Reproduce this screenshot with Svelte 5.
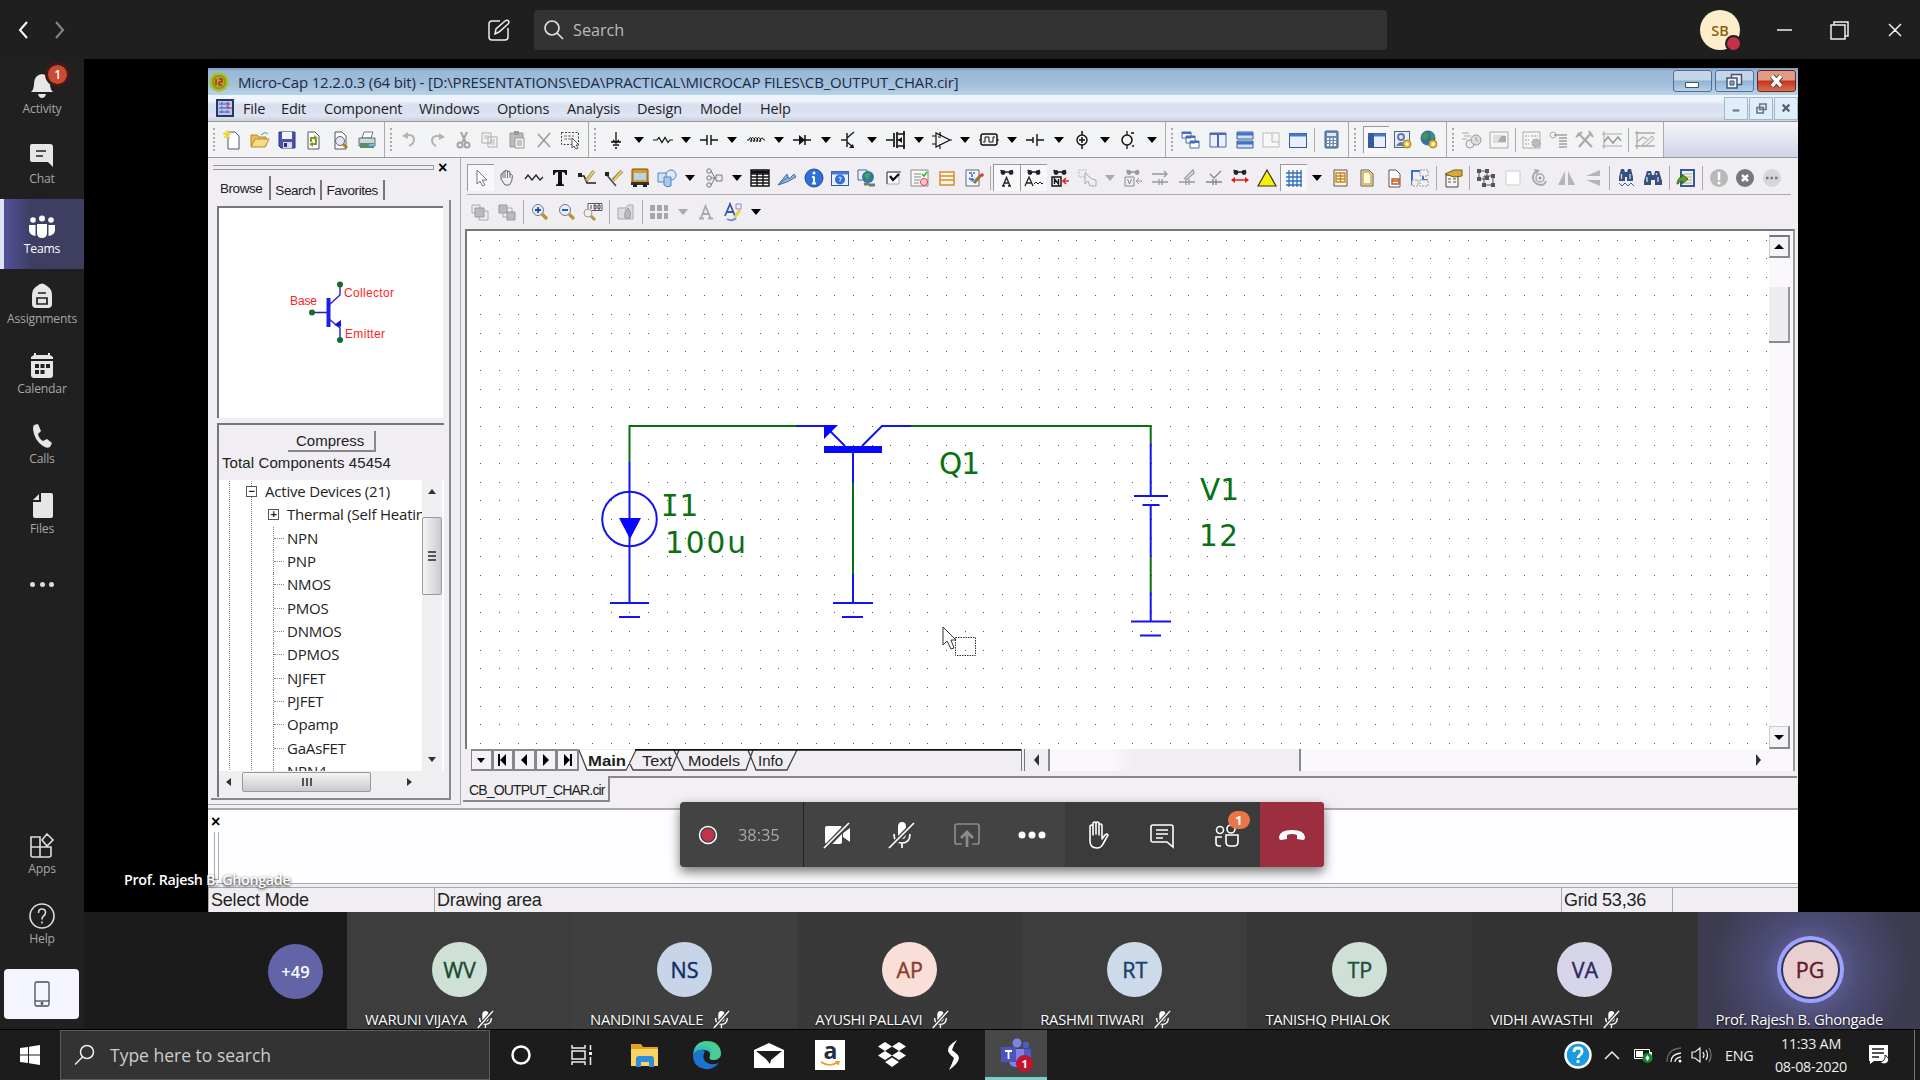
<script>
  // Toolbar glyphs, each drawn in a 20x20 box.
  const page = '<path d="M5 2h7l4 4v13H5z" fill="#fff" stroke="#556" />';
  const glass = '<circle cx="8" cy="8" r="5.5" fill="#e4eefc" stroke="#778"/><path d="M12 12l5 5" stroke="#b99335" stroke-width="3.2"/>';
  const win = '<rect x="1.5" y="3.500" width="17" height="14" fill="#e8f0ff" stroke="#345a9c"/><path d="M1.500 5h17" stroke="#4a78d0" stroke-width="3"/>';
  const specs = '<path d="M3 3l2-1M14 3l2-1" stroke="COL"/><circle cx="6" cy="4.500" r="2.400" fill="COL"/><circle cx="14" cy="4.500" r="2.400" fill="COL"/><path d="M8 4h4" stroke="COL" stroke-width="1.500"/>';
  const dark = specs.replaceAll('COL', '#222');
  const pale = specs.replaceAll('COL', '#999');
  const bulb = '<circle cx="14" cy="14" r="4" fill="#eac63c" stroke="#a5821c"/><circle cx="14" cy="14" r="1.500" fill="#fff"/>';
  const art = {
    new: page + '<path d="M1 2l6 6M7 1L1 8M4 0v8M0 4h8" stroke="#e8d838" stroke-width="1.300"/>',
    open: '<path d="M1 16V5h6l2 2h7v9z" fill="#e8bd50" stroke="#b98b2c"/><path d="M1 17l4-8h14l-4 8z" fill="#f7dc85" stroke="#b98b2c"/><path d="M11 5q4-4 7-1" stroke="#58a" fill="none"/>',
    save: '<path d="M2 2h16v16H4l-2-2z" fill="#4c50ae" stroke="#2e3180"/><path d="M5 2h10v7H5z" fill="#f4f4ff"/><path d="M6 12h9v6H6z" fill="#d8d8e8"/><path d="M7 13h3v4H7z" fill="#2e3180"/>',
    revert: page + '<path d="M8 12V8h4M13 9v5H9" stroke="#7c9f22" stroke-width="2" fill="none"/><path d="M11 5l4 3-4 2zM10 17l-4-3 4-2z" fill="#7c9f22"/>',
    preview: page + '<circle cx="10" cy="11" r="4.500" fill="#dce8f8" stroke="#666"/><path d="M13 14l4 4" stroke="#b97a25" stroke-width="3"/>',
    print: '<path d="M5 8l2-6h9l-2 6z" fill="#fff" stroke="#777"/><path d="M2 8h16v8H2z" fill="#cdd6dc" stroke="#667"/><path d="M3 13h14v5H3z" fill="#5c8e6a"/><path d="M12 14h5v2h-5z" fill="#76b8e8"/>',
    undo: '<path d="M4 6q9-3 10 3 0 5-5 7" stroke="#b4b4b4" stroke-width="2" fill="none"/><path d="M2 6l6-4v7z" fill="#b4b4b4"/>',
    redo: '<path d="M15 7q-9-3-10 3 0 4 4 6" stroke="#b4b4b4" stroke-width="2" fill="none"/><path d="M18 7l-6-4v7z" fill="#b4b4b4"/>',
    cut: '<path d="M7 2l5 11M13 2L8 13" stroke="#a6a6a6" stroke-width="2"/><circle cx="6" cy="15" r="2.500" stroke="#a6a6a6" stroke-width="2" fill="none"/><circle cx="13" cy="15" r="2.500" stroke="#a6a6a6" stroke-width="2" fill="none"/>',
    copy: '<path d="M2 3h9v10H2zM8 7h9v10H8z" fill="#f6f6f6" stroke="#aaa"/><path d="M4 6h5M4 8h4M10 10h5M10 12h5M10 14h5" stroke="#b5b5b5"/>',
    paste: '<path d="M3 3h13v14H3z" fill="#bbb" stroke="#999"/><path d="M7 1h5v4H7z" fill="#999"/><path d="M8 8h9v10H8z" fill="#f1f1f1" stroke="#999"/><path d="M10 11h5M10 13h5M10 15h5" stroke="#999"/>',
    del: '<path d="M4 4l12 13M16 3L4 17" stroke="#999" stroke-width="1.600"/>',
    sel: '<path d="M1.500 2.500h17v12h-17z" fill="none" stroke="#444" stroke-dasharray="2 1.500"/><path d="M4 6h10M4 9h7" stroke="#777" stroke-dasharray="3 1"/><path d="M12 8v10l2-2 2 3 2-1-2-3h3z" fill="#fff" stroke="#555"/>',
    gnd: '<path d="M10 2v10M5 12h10M7 15h6M9 18h2M7 10l3 3 3-3" stroke="#111" stroke-width="1.300" fill="none"/>',
    res: '<path d="M0 10h4l2-2.500 3 5 3-5 3 5 2-2.500h3" stroke="#111" fill="none" stroke-width="1.200"/>',
    cap: '<path d="M1 10h7M12 10h7M8 5v10M12 5v10" stroke="#111" stroke-width="1.400"/>',
    ind: '<path d="M1 10h2q1-5 3 0q-2 4-1 0q1-5 4 0q-2 4-1 0q1-5 4 0q-2 4-1 0q1-5 4 0q-2 4-1 0q2-4 4 0h1" stroke="#111" fill="none"/>',
    dio: '<path d="M1 10h18M13 5v10" stroke="#111" stroke-width="1.500"/><path d="M7 5l6 5-6 5z" fill="#111"/>',
    npn: '<path d="M2 10h6M8 3v14M8 8l7-6M8 12l6 5" stroke="#222" stroke-width="1.500"/><path d="M15 18h-5l4-4z" fill="#111"/>',
    mos: '<path d="M0 10h7M8 3v14M11 2v16M11 4h8M11 10h5M11 16h8M18 1v18" stroke="#111" stroke-width="1.700"/><path d="M12 10l4-3v6z" fill="#111"/>',
    amp: '<path d="M4 3v14l14-7zM0 6h4M0 14h4M8 2v4M8 14v5M18 10h2M6 7h3" fill="none" stroke="#111" stroke-width="1.200"/>',
    dig: '<rect x="2" y="4" width="16" height="11" rx="2" fill="none" stroke="#111" stroke-width="1.500"/><path d="M4 12h2V7h4v5h4V7h2M0 10h2M18 10h2" fill="none" stroke="#111"/>',
    bat: '<path d="M1 10h7M12 10h7M8 7v6M12 4v12" stroke="#111" stroke-width="1.400"/>',
    src: '<circle cx="10" cy="10" r="5" fill="none" stroke="#111" stroke-width="1.400"/><path d="M10 1v4M10 15v4M7 10h6M10 7v6" stroke="#111" stroke-width="1.500"/>',
    osc: '<circle cx="9" cy="10" r="5" fill="none" stroke="#111" stroke-width="1.500"/><path d="M9 1v4M9 15v4M13 3h3M14 16h2" stroke="#111" stroke-width="1.300"/>',
    casc: '<path d="M1 2h9v6H1zM5 6h9v7H5zM9 11h9v7H9z" fill="#fff" stroke="#456cb4"/><path d="M1 3h9M5 7h9M9 12h9" stroke="#456cb4" stroke-width="2"/>',
    tilev: '<path d="M2 3h16v14H2z" fill="#e9f0ff" stroke="#53679c"/><path d="M2 4h16M10 3v14" stroke="#5067ac" stroke-width="2"/>',
    tileh: '<path d="M2 2h16v7H2zM2 11h16v7H2z" fill="#cfe1fb" stroke="#355a99"/><path d="M2 4h16M2 13h16" stroke="#4374c4" stroke-width="3"/>',
    tile: '<path d="M2 3h16v14H2zM11 3v9h7" fill="#f8f8f8" stroke="#bbb"/>',
    win,
    calc: '<rect x="4" y="1" width="13" height="17" rx="1" fill="#6f8db5" stroke="#42618c"/><path d="M6 3h9v3H6z" fill="#d9ecff"/><path d="M6 9h9M6 12h9M6 15h9" stroke="#fff" stroke-width="1.800" stroke-dasharray="2 1.500"/>',
    pan: win + '<path d="M2 3h5v15H2z" fill="#355a99"/>',
    user: '<rect x="1.500" y="1.500" width="15" height="16" fill="#e8ecff" stroke="#566"/><circle cx="8" cy="7" r="3" fill="none" stroke="#67a" stroke-width="2"/><path d="M3 16q5-8 10 0" fill="#67a"/>' + bulb,
    globe: '<circle cx="9" cy="8" r="7.500" fill="#3272a8"/><path d="M3 5q4-5 7 0l-3 5-4-1zM12 2q4 3 4 6l-4 2z" fill="#45964c"/>' + bulb,
    g1: '<path d="M0 3h7M2 6h7M0 9h5" stroke="#aaa"/><circle cx="8" cy="14" r="4" fill="#eee" stroke="#999"/><circle cx="14" cy="10" r="5" fill="#ddd" stroke="#999"/><path d="M14 7v3l2 1" stroke="#999" fill="none"/>',
    g2: '<path d="M1 2h18v16H1z" fill="#f5f5f5" stroke="#aaa"/><path d="M4 5h12v8H4z" fill="#ddd"/><path d="M12 6h5v6h-8z" fill="#aaa"/>',
    g3: '<path d="M1 2h17v16H1z" fill="#f5f5f5" stroke="#aaa"/><path d="M3 6h4M3 10h4M3 14h4M9 6h7" stroke="#999" stroke-dasharray="2 1"/><circle cx="14" cy="13" r="4" fill="#bbb" stroke="#999" stroke-dasharray="2 1"/>',
    g4: '<circle cx="4" cy="5" r="3" fill="none" stroke="#aaa"/><path d="M5 5h5M10 5h8M10 8h8M10 11h8M10 14h8M10 17h8" stroke="#777"/>',
    g5: '<path d="M3 3l14 14M16 3L4 17M1 7l6-5M14 1l4 6" stroke="#aaa" stroke-width="2.200"/>',
    g6: '<path d="M2 1v18M0 16h20M0 4h20" stroke="#aaa"/><path d="M2 12l4-5 5 6 5-6 3 4" fill="none" stroke="#999" stroke-width="1.500"/>',
    g7: '<path d="M2 1v18M0 16h20M0 3h20M2 12l6-5 4 2" fill="none" stroke="#aaa" stroke-width="1.300"/><path d="M7 15l10-9 2 3-8 7z" fill="#e8e8e8" stroke="#aaa"/>',
    cur: '<path d="M6 2v14l3-3 2.500 5 2.300-1-2.500-5H16z" fill="#fff" stroke="#777"/>',
    hand: '<path d="M4 11V6q2-1 2 0V4q2-2 2 0V3q2-2 2.500 0v1q2-1.500 2.500 0v3q2-1 2.500.500 0 6-3 9.500H8z" fill="#eee" stroke="#666"/><path d="M6 6v4M8 4v6M10.500 4v6M13 5v5" stroke="#777"/>',
    wave: '<path d="M1 11l3-4 4 5 4-5 4 5 3-3" stroke="#222" stroke-width="1.300" fill="none"/>',
    T: '<path d="M3 2h14v5h-1.500Q15 4 12 4v11q0 1.500 2 1.500V18H6v-1.500q2 0 2-1.500V4Q5 4 4.500 7H3z" fill="#111"/>',
    wire: '<path d="M3 8h4l3 7h9" stroke="#222" stroke-width="1.500" fill="none"/><path d="M1 5h4v4H1z" fill="#222"/><path d="M9 13L17 3" stroke="#9b8c3c" stroke-width="3.400"/><path d="M10 12l7-9" stroke="#f2dd7a" stroke-width="1.400"/>',
    diag: '<path d="M2 6l10 12" stroke="#444" stroke-width="1.500"/><path d="M1 4h4v4H1z" fill="#222"/><path d="M9 12l9-9" stroke="#9b8c3c" stroke-width="3.400"/><path d="M10 12l8-9" stroke="#f2dd7a" stroke-width="1.400"/>',
    bus: '<rect x="2" y="1" width="16" height="15" rx="1" fill="#d29d2a" stroke="#6b4f14"/><path d="M4 5h12v7H4z" fill="#b9d3ee"/><path d="M1 14h18v3H1z" fill="#333"/><path d="M3 16h4v3H3zM13 16h4v3h-4z" fill="#222"/>',
    shp: '<path d="M1 5h9v9H1z" fill="#cfe2fa" stroke="#5a83b8"/><circle cx="14" cy="7" r="5" fill="#dcebfc" stroke="#5a83b8"/><path d="M7 9h7v9q-4 2-7-1z" fill="#a8c8ee" stroke="#5a83b8"/>',
    net: '<circle cx="5" cy="3" r="2.200" fill="none" stroke="#777"/><circle cx="5" cy="10" r="2.200" fill="none" stroke="#777"/><circle cx="5" cy="17" r="2.200" fill="none" stroke="#777"/><path d="M7 3l4 7-4 7M7 10h5M12 7h6v6h-6z" fill="none" stroke="#777"/>',
    tab: '<path d="M1 2h18v16H1zM1 6h18M1 9h18M1 12h18M1 15h18M7 2v16M13 2v16" fill="#fff" stroke="#111" stroke-width="1.400"/><path d="M1 4h18" stroke="#111" stroke-width="3"/>',
    pen: '<path d="M1 17L10 6l2 5 5-5 2 3-9 5z" fill="#8db3e2" stroke="#46719e"/><path d="M2 16l9-7" stroke="#46719e"/>',
    info: '<circle cx="10" cy="10" r="9" fill="#2f6fd6" stroke="#1c489c"/><path d="M10 8.500v7M8 15.500h4M8 9h2" stroke="#fff" stroke-width="2"/><circle cx="10" cy="5" r="1.500" fill="#fff"/>',
    hlp: win + '<circle cx="10" cy="11.500" r="5" fill="#2f6fd6"/><path d="M8.500 10q1.500-2 3 0L10 12v1.500" stroke="#fff" fill="none"/>',
    web: '<path d="M1 2h9v10H1z" fill="#eef" stroke="#568"/><circle cx="11" cy="9" r="6" fill="#2f7aa5"/><path d="M7 8q3-5 6-2l-2 6z" fill="#50a34c"/><path d="M7 16h5M12 17h6" stroke="#777" stroke-width="3"/>',
    chk: '<path d="M3 4h12v12H3z" fill="#fff" stroke="#aaa"/><path d="M3 16V4h14" stroke="#444" fill="none"/><path d="M6 8l3 4 6-6" stroke="#111" stroke-width="2.400" fill="none"/>',
    err: '<path d="M1 2h17v16H1z" fill="#f8f8f8" stroke="#888"/><path d="M4 6h7M4 9h7M4 12h6M4 15h5" stroke="#888"/><path d="M12 6l2 2 3-4" stroke="#2b2" fill="none" stroke-width="1.500"/><circle cx="14" cy="14" r="3.500" fill="#fcd" stroke="#e33"/>',
    org: '<path d="M3 4h14v13H3zM3 8h14M3 12h14" fill="#fff8ec" stroke="#d98a2b" stroke-width="1.500"/>',
    edit: '<path d="M2 2h13v16H2z" fill="#f4f6ff" stroke="#667"/><path d="M5 5h6M8 6v6M5 10l3 3 3-3" stroke="#36c" stroke-width="1.500" fill="none" stroke-dasharray="3 1"/><path d="M10 15l7-8" stroke="#98742d" stroke-width="3"/><circle cx="18" cy="7" r="1.800" fill="#d33"/>',
    sa: dark + '<path d="M6 18L9.500 9.500 13 18M7.500 15h4M5 18h3M11 18h3" stroke="#222" stroke-width="1.400" fill="none"/>',
    sw: dark + '<path d="M1 18L5 9l4 9M2.500 15h5" stroke="#222" fill="none" stroke-width="1.300"/><path d="M10 16l2-2 2 2 2-2 2 2 1-1" stroke="#222" fill="none"/>',
    sn: dark + '<path d="M2 9h9v9H2zM4.500 16v-5l4 5v-5" fill="none" stroke="#111" stroke-width="1.400"/><path d="M13 13h6M16 10l-3 3 3 3" stroke="#d22" stroke-width="1.500" fill="none"/>',
    gc: '<path d="M2 2h7v7H2z" fill="#eee" stroke="#bbb" stroke-dasharray="2 1"/><path d="M8 5v11l3-3 2 5h6v-6l-4-1z" fill="#eee" stroke="#aaa"/>',
    sv: pale + '<path d="M2 9h9v9H2zM4.500 11l2 5 2-5" fill="none" stroke="#888"/><path d="M13 13h6M16 10l-3 3 3 3" stroke="#999" fill="none"/>',
    p1: '<path d="M2 6h15M14 3l3 3-3 3M2 14h16M9 11v6M12 11v6" fill="none" stroke="#999" stroke-width="1.300"/>',
    p2: '<path d="M7 11L16 2l1 3-8 7M2 14h16M9 11v6M12 11v6" fill="none" stroke="#999" stroke-width="1.300"/>',
    p3: '<path d="M6 6l4 4 7-7M2 14h16M9 11v6M12 11v6" fill="none" stroke="#888" stroke-width="1.400"/>',
    sr: dark + '<path d="M2 12h16" stroke="#d22" stroke-width="1.500"/><path d="M5 9v6l-4-3zM15 9v6l4-3z" fill="#d22"/>',
    tri: '<path d="M10 2l9 16H1z" fill="#f8f000" stroke="#333" stroke-width="1.200"/>',
    grid: '<path d="M2 5h16M2 9h16M2 13h16M2 17h16M5 2v17M9 2v17M13 2v17M17 2v17" stroke="#336fc0" stroke-width="1.300"/>',
    ob: '<path d="M4 2h13v16H4z" fill="#fff7dd" stroke="#555"/><path d="M6 5h9v9H6zM10.500 5v9M6 8h9M6 11h9" fill="none" stroke="#c78526" stroke-width="1.400"/>',
    op: '<path d="M4 2h8l4 4v12H4z" fill="#fffbe5" stroke="#555"/><path d="M6 4h6l2 3v9H6z" fill="none" stroke="#d4aa3c" stroke-width="1.500"/>',
    oc: page + '<path d="M8 11h7v5H8zM8 13h7" fill="#fff" stroke="#c65b20" stroke-width="1.400"/>',
    blk: '<path d="M2 17V3h11v9h5" stroke="#3c72cf" stroke-width="2" fill="none"/><path d="M10 2h8v6h-8zM10 12h8v6h-8zM2 12h6v6H2z" fill="#f1f1f8" stroke="#999" stroke-dasharray="2 1"/>',
    prop: '<path d="M3 7h12v12H3z" fill="#f5f5f5" stroke="#444"/><path d="M5 11h3M5 14h3M10 11h3M10 14h3" stroke="#555"/><path d="M2 6l9-4h8v6l-8 1z" fill="#d8ab3c" stroke="#7c5c14"/>',
    han: '<path d="M3 3h8v8H3zM8 8h9v9H8z" fill="none" stroke="#555"/><path d="M1 1h4v4H1zM9 1h4v4H9zM1 9h4v4H1zM15 6h4v4h-4zM6 15h4v4H6zM15 15h4v4h-4zM9 8h4v4H9z" fill="#555"/>',
    box: '<path d="M3 3h14v14H3z" fill="#fff" stroke="#ccc"/>',
    rot: '<path d="M5 4q-5 7 2 12 7 3 9-3" fill="none" stroke="#aaa" stroke-width="2"/><circle cx="10" cy="10" r="4" fill="none" stroke="#aaa" stroke-width="1.500"/><path d="M4 1l6 1-4 5z" fill="#aaa"/><circle cx="10" cy="10" r="1.500" fill="#999"/>',
    fh: '<path d="M9 3v14H2zM12 3v14h7z" fill="#b5b5b5"/>',
    fv: '<path d="M3 8l14-6v6zM3 12h14v6z" fill="#b5b5b5"/>',
    bin: '<path d="M1 13l3-10h4l1 4h2l1-4h4l3 10v4h-7v-5H8v5H1z" fill="#35517f"/><path d="M4 9v5M15 9v5M6 5v2M13.500 5v2" stroke="#c5d8f2" stroke-width="1.400"/>',
    binw: '<path d="M3 9l2-8h3l1 3h2l1-3h3l2 8v4h-6V9H9v4H3z" fill="#35517f"/><path d="M5.500 6v5M14 6v5" stroke="#c5d8f2" stroke-width="1.300"/><path d="M3 15l3 3 3-3 3 3 3-3 3 3" stroke="#36a" fill="none"/>',
    note: '<path d="M5 2h13v16H5z" fill="#e8f0ff" stroke="#355a99" stroke-width="2"/><path d="M8 6h8M8 9h8M8 12h8M8 15h8" stroke="#c9b14c"/><path d="M1 16q1-7 5-7V6l6 5-6 5v-3q-3 0-4 3z" fill="#5b9e2d" stroke="#2f6d18"/>',
    b1: '<circle cx="10" cy="10" r="9" fill="#b9b9b9"/><path d="M10 4v8" stroke="#fff" stroke-width="2.500"/><circle cx="10" cy="15" r="1.500" fill="#fff"/>',
    b2: '<circle cx="10" cy="10" r="9" fill="#777"/><path d="M7 7l6 6M13 7l-6 6" stroke="#fff" stroke-width="2.500"/>',
    b3: '<circle cx="10" cy="10" r="9" fill="#d7d7d7"/><path d="M4 10h12" stroke="#777" stroke-width="2.500" stroke-dasharray="2.500 2"/>',
    q1: '<path d="M2 3h8v8H2zM9 9h9v9H9z" fill="#eee" stroke="#aaa"/><path d="M5 6h9v9H5z" fill="#bbb" stroke="#999"/>',
    q2: '<path d="M6 6h9v9H6z" fill="#eee" stroke="#aaa"/><path d="M2 3h8v8H2zM10 10h8v8h-8z" fill="#bbb" stroke="#999"/>',
    zin: glass + '<path d="M5 8h6M8 5v6" stroke="#234a9a" stroke-width="1.800"/>',
    zout: glass + '<path d="M5 8h6" stroke="#234a9a" stroke-width="1.800"/>',
    z100: '<path d="M5 1.500h14v7H5z" fill="#fff" stroke="#555"/><path d="M8 3v4M11 3h2v4h-2zM15 3h2v4h-2z" stroke="#333" fill="none"/><circle cx="5" cy="11" r="4" fill="#eee" stroke="#999"/><path d="M8 14l4 4" stroke="#b99335" stroke-width="3"/>',
    cam: '<path d="M2 6h8l2-3h5v14H2z" fill="#ddd" stroke="#aaa"/><path d="M9 16q-1-7 3-10 4 4 2 10z" fill="#bbb" stroke="#999"/>',
    gs: '<path d="M1 3h5v6H1zM8 3h5v6H8zM15 3h4v6h-4zM1 11h5v6H1zM8 11h5v6H8zM15 11h4v6h-4z" fill="#a6a6a6"/>',
    A: '<path d="M5 16L9.500 4l5 12M7 12h6M3 16.500h5M12 16.500h5" stroke="#aaa" stroke-width="1.800" fill="none"/>',
    Ac: '<path d="M2 14L7 2l5 12M4 10h7" stroke="#3758a6" stroke-width="1.800" fill="none"/><path d="M13 2h5v5h-5z" fill="none" stroke="#88c"/><path d="M12 15l5-7" stroke="#e8d43c" stroke-width="3"/><path d="M4 17q5 3 9-1" stroke="#69c" stroke-width="2" fill="none"/>'
  };
  const L = (s) => s.split(' ');
  // "v" is a drop-down arrow, "w" its disabled form, "|" a separator.
  const row1 = [
    ['file', 177, L('new open save revert preview print')],
    ['edit', 204, L('undo redo cut copy paste del sel')],
    ['parts', 577, L('gnd v res v cap v ind v dio v npn v mos v amp v dig v bat v src v osc v')],
    ['wins', 183, L('casc tilev tileh tile win | calc')],
    ['panels', 98, L('*pan user globe')],
    ['run', 217, L('g1 g2 | g3 g4 g5 g6 | g7')]
  ];
  const row2 = L('*cur hand wave T wire diag bus shp v net v tab pen info hlp web chk err org edit | *sa *sw sn gc w sv p1 p2 p3 sr tri *grid v ob op oc blk | prop | han box rot fh fv | binw bin | note | b1 b2 b3');
  const row3 = L('q1 q2 | zin zout z100 | cam | gs w A Ac v');

  const menus = [['File', 38], ['Edit', 43], ['Component', 95], ['Windows', 78], ['Options', 70], ['Analysis', 70], ['Design', 63], ['Model', 60], ['Help', 40]];
  const tree = ['NPN', 'PNP', 'NMOS', 'PMOS', 'DNMOS', 'DPMOS', 'NJFET', 'PJFET', 'Opamp', 'GaAsFET', 'NPN4'];

  let dots = '';
  for (let r = 0; r < 28; r++) for (let c = 0; c < 70; c++) dots += `M${Math.round(480.3 + c * 18.63)} ${Math.round(239.5 + r * 18.64)}h1v1h-1z`;

  const nav = [
    ['Activity', '<path d="M2 20q3-3 3-8 0-9 8-10 8 1 8 10 0 5 3 8zM9 22h8q-1 4-4 4t-4-4z" fill="#e6e6e6"/>'],
    ['Chat', '<path d="M3 2h18q3 0 3 3v20l-5-5H3q-2 0-2-2V4q0-2 2-2z" fill="#e6e6e6"/><path d="M7 9h10M7 14h7" stroke="#202020" stroke-width="1.700"/>'],
    ['Teams', '<g fill="#fff"><circle cx="4" cy="6" r="2.800"/><circle cx="13" cy="4.500" r="3"/><circle cx="22" cy="6" r="2.800"/><path d="M0 11h6.500v11Q0 21 0 16zM26 11h-6.500v11q6.500-1 6.500-6zM8 10h10v9q0 5-5 5t-5-5z"/></g>'],
    ['Assignments', '<path d="M8 4q5-5 10 0 5 3 5 9v9q0 4-4 4H7q-4 0-4-4v-9q0-6 5-9z" fill="#e6e6e6"/><path d="M9 11h8M8 16h10v6H8z" fill="none" stroke="#202020" stroke-width="1.700"/>'],
    ['Calendar', '<path d="M2 9h22v14q0 3-3 3H5q-3 0-3-3zM2 7V5l3-2h16l3 2v2z" fill="#e6e6e6"/><path d="M6 1v4M20 1v4" stroke="#e6e6e6" stroke-width="2"/><g fill="#202020"><path d="M6 12h4v4H6zM11.500 12h4v4h-4zM17 12h4v4h-4zM6 18h4v4H6zM11.500 18h4v4h-4z"/></g>'],
    ['Calls', '<path d="M5 3l4-1 3 7-3 3q1 5 5 7l4-2 5 4-2 4q-3 2-7-1Q5 18 4 7 4 4 5 3z" fill="#e6e6e6"/>'],
    ['Files', '<path d="M12 1h10q2 0 2 2v21q0 2-2 2H6q-2 0-2-2V10h8zM10 2v6H4z" fill="#e6e6e6"/>']
  ];

  const people = [
    ['WV', 'WARUNI VIJAYA', 1, '#cfe0d6', '#194a31', '#3d3d3d'],
    ['NS', 'NANDINI SAVALE', 1, '#c8d4e8', '#0d2e66', '#3f3f3f'],
    ['AP', 'AYUSHI PALLAVI', 1, '#fadfd9', '#8a3b2c', '#393939'],
    ['RT', 'RASHMI TIWARI', 1, '#ccdaea', '#173f6b', '#3d3d3d'],
    ['TP', 'TANISHQ PHIALOK', 0, '#cfe0d6', '#1d5138', '#373737'],
    ['VA', 'VIDHI AWASTHI', 1, '#d6d4e8', '#2d2860', '#333333'],
    ['PG', 'Prof. Rajesh B. Ghongade', 0, '#e8cfd2', '#621b24', '#3d3b50']
  ];
</script>

{#snippet tools(list)}
  {#each list as k}
    {#if k === '|'}<i class="sep"></i>
    {:else if k === 'v' || k === 'w'}<i class="drop" class:off={k === 'w'}></i>
    {:else}<span class="tool" class:on={k[0] === '*'}><svg viewBox="0 0 20 20" width="20" height="20">{@html art[k.replace('*', '')]}</svg></span>{/if}
  {/each}
{/snippet}

{#snippet mic()}
  <svg viewBox="0 0 20 20" width="18" height="20"><path d="M7 5q0-4 3.500-4T14 5v5q0 3-3.500 3T7 10z" fill="#fff" /><path d="M4 9q0 7 6.500 7T17 9M10.500 16v4" fill="none" stroke="#fff" stroke-width="1.500" /><path d="M2 20L19 1" stroke="#3a3a3a" stroke-width="4" /><path d="M2 20L19 1" stroke="#fff" stroke-width="1.500" /></svg>
{/snippet}

<div class="screen">
  <header>
    <svg class="arrows" viewBox="0 0 60 24" width="60" height="24" fill="none" stroke-width="2"><path d="M11 4l-7 8 7 8" stroke="#fff" /><path d="M40 4l7 8-7 8" stroke="#888" /></svg>
    <svg class="compose" viewBox="0 0 22 22" width="22" height="22" fill="none" stroke="#eee" stroke-width="1.500"><path d="M12 2H4q-3 0-3 3v13q0 3 3 3h13q3 0 3-3V9M7 15l1-5 9-8q3-2 4 1 0 1-1 2l-9 8z" /></svg>
    <div class="search"><svg viewBox="0 0 22 22" width="22" height="22" fill="none" stroke="#ddd" stroke-width="1.700"><circle cx="9" cy="9" r="7" /><path d="M14 14l6 6" /></svg><span>Search</span></div>
    <div class="me">SB<i></i></div>
    <svg class="wc" viewBox="0 0 150 24" width="150" height="24" fill="none" stroke="#eee" stroke-width="1.500"><path d="M8 12h15M62 7h14v14H62zM65 7V4h14v14h-3M120 6l12 12M132 6l-12 12" /></svg>
  </header>

  <div class="body">
    <nav>
      {#each nav as [label, d], i}
        <div class="item" class:active={i === 2}>
          <svg viewBox="0 0 26 27" width="26" height="27">{@html d}</svg>
          <span>{label}</span>
          {#if i === 0}<b>1</b>{/if}
        </div>
      {/each}
      <div class="item more"><i></i><i></i><i></i></div>
      <div class="item low">
        <svg viewBox="0 0 26 26" width="26" height="26" fill="none" stroke="#ddd" stroke-width="1.600"><path d="M2 4h9v20H4q-2 0-2-2zM2 14h20v8q0 2-2 2h-9M11 14V4M18 1l6 6-6 6-5-6z" /></svg><span>Apps</span>
      </div>
      <div class="item">
        <svg viewBox="0 0 26 26" width="26" height="26" fill="none" stroke="#ddd" stroke-width="1.600"><circle cx="13" cy="13" r="12" /><path d="M9.500 10q0-4 3.500-4t3.500 3.500q0 2-2 3.500-1.500 1-1.500 3.500M13 18.500v2" /></svg><span>Help</span>
      </div>
      <div class="phone"><svg viewBox="0 0 16 26" width="16" height="26" fill="none" stroke="#4a4a5c" stroke-width="1.300"><rect x="1" y="1" width="14" height="24" rx="1.500" /><path d="M1 20h14" /><circle cx="8" cy="22.500" r=".800" fill="#4a4a5c" /></svg></div>
    </nav>

    <main>
      <section class="share">
        <div class="app">
          <div class="title">
            <svg viewBox="0 0 20 20" width="20" height="20"><circle cx="10" cy="10" r="8.500" fill="#7d9c28" stroke="#a9c22b" stroke-width="2.500" /><circle cx="10" cy="10" r="5.500" fill="#c9932a" /><path d="M7 7v6M10 7h3v3h-3v3h3" stroke="#622" fill="none" /></svg>
            <span>Micro-Cap 12.2.0.3 (64 bit) - [D:\PRESENTATIONS\EDA\PRACTICAL\MICROCAP FILES\CB_OUTPUT_CHAR.cir]</span>
            <div class="caps">
              <i><svg viewBox="0 0 38 20" width="38" height="20"><path d="M11.500 11.500h13v5h-13z" fill="#fff" stroke="#456" /></svg></i>
              <i><svg viewBox="0 0 38 20" width="38" height="20"><path d="M15.500 3.500h10v10h-10z" fill="#eef" stroke="#456" stroke-width="1.500" /><path d="M11 7h10v10H11z" fill="#eef" stroke="#456" stroke-width="1.500" /><path d="M14 10h4v4h-4z" fill="#8aa4c4" stroke="#456" /></svg></i>
              <i class="x"><svg viewBox="0 0 38 20" width="38" height="20"><path d="M14 5l9 10M23 5l-9 10" stroke="#5b3838" stroke-width="5.500" /><path d="M14 5l9 10M23 5l-9 10" stroke="#fff" stroke-width="3.500" /></svg></i>
            </div>
          </div>
          <div class="menu">
            <svg viewBox="0 0 18 18" width="18" height="18"><path d="M1 1h16v16H1z" fill="#bcc6ea" stroke="#26376b" stroke-width="2" /><path d="M3 5h12M3 9h12M3 13h12M6 3v12M11 3v12" stroke="#3d50b5" stroke-dasharray="3 1" /><path d="M12 3v6h4" stroke="#c34" fill="none" /></svg>
            {#each menus as [m, w]}<span style:width="{w}px">{m}</span>{/each}
            <div class="mdi"><i><svg viewBox="0 0 12 12" width="10" height="10" fill="none" stroke="#678" stroke-width="2.500"><path d="M2 9h8" /></svg></i><i><svg viewBox="0 0 12 12" width="11" height="11" fill="none" stroke="#678" stroke-width="1.700"><path d="M4 1h7v6H4zM1 5h7v6H1z" /></svg></i><i><svg viewBox="0 0 12 12" width="10" height="10" fill="none" stroke="#567" stroke-width="2.700"><path d="M2 2l8 8M10 2l-8 8" /></svg></i></div>
          </div>
          <div class="bar1">
            {#each row1 as [name, w, list]}<div class="group {name}" style:width="{w}px">{@render tools(list)}</div>{/each}
          </div>

          <div class="work">
            <aside>
              <div class="grip"><i></i><b>×</b></div>
              <div class="tabs"><span class="cur">Browse</span><span>Search</span><span>Favorites</span></div>
              <div class="sheet">
                <div class="preview">
                  <svg viewBox="219 208 224 208" width="224" height="208">
                    <g stroke="#2020e0" fill="none"><path d="M312 312.500h15M329 305l11-10V284M329 319l11 9v12" stroke-width="1.400" /><path d="M328.500 298v29" stroke-width="4" /></g>
                    <path d="M341 327v-7l-7 5z" fill="#11d" />
                    <g fill="#176b2c"><circle cx="340" cy="284.500" r="3" /><circle cx="312" cy="312.500" r="3" /><circle cx="340" cy="340" r="3" /></g>
                    <g class="red"><text x="290" y="305" textLength="27">Base</text><text x="344" y="297" textLength="50">Collector</text><text x="345" y="338" textLength="40">Emitter</text></g>
                  </svg>
                </div>
                <div class="list">
                  <div class="compress">Compress</div>
                  <p>Total Components 45454</p>
                  <div class="treebox">
                    <div class="tree">
                      <div class="l1"><i>−</i>Active Devices (21)</div>
                      <div class="l2"><i>+</i>Thermal (Self Heating)</div>
                      {#each tree as t}<div class="l3">{t}</div>{/each}
                    </div>
                    <div class="vs"><s class="up"></s><b><i></i></b><s class="dn"></s></div>
                  </div>
                  <div class="hs"><s class="lf"></s><b><i></i></b><s class="rt"></s></div>
                </div>
              </div>
            </aside>

            <div class="doc">
              <div class="bar2">{@render tools(row2)}</div>
              <div class="bar3">{@render tools(row3)}</div>
              <div class="canvas">
                <svg class="sch" viewBox="467 231 1302 518" width="1302" height="518">
                  <path d={dots} fill="#555" shape-rendering="crispEdges" />
                  <g fill="none" stroke-width="2">
                    <path stroke="#0a7014" d="M629.500 462V426H796M911 426h239.700v17M853 483v91M1150.700 557v35" />
                    <path stroke="#1414ee" d="M796 426h40M829 430l16 16M862 446l20-20h29M853 452v31M853 574v29M833 603h40M842 617h21M629.500 462v141M610 603h39M619 617h21M1150.700 443v53M1134 496h34M1142.500 505h17M1150.700 505v52M1150.700 592v30M1131 621.500h40M1140 635.500h21" />
                    <circle cx="629.500" cy="519" r="27.300" stroke="#1414ee" />
                  </g>
                  <path fill="#0808ff" d="M824 425h14l-14 14zM824 446h58v7h-58zM619 518h22l-11 21z" />
                  <g class="lab"><text x="939" y="474" textLength="41">Q1</text><text x="661" y="516" class="mono">I</text><text x="679.500" y="516">1</text><text x="665" y="553" textLength="81">100u</text><text x="1200" y="500" textLength="39">V1</text><text x="1199" y="546" textLength="39">12</text></g>
                  <path d="M943 627v18l4-4 4 8 3-1-3-8h5z" fill="#fff" stroke="#333" /><path d="M955.500 637.500h20v18h-20z" fill="none" stroke="#333" stroke-dasharray="1.500 1" />
                </svg>
                <div class="cvs"><u class="tp"><s class="up"></s></u><b></b><u><s class="dn"></s></u></div>
              </div>
              <div class="sheets">
                <i><s class="dn"></s></i><i class="f"><s class="lf"></s></i><i><s class="lf"></s></i><i><s class="rt"></s></i><i class="l"><s class="rt"></s></i>
                <svg viewBox="579 749 442 22" width="442" height="22"><path d="M579 750l8 20h39l10-20M627 758l6 12h38l8-20M674 750l10 20h62l7-20M748 750l8 20h31l10-20" fill="none" stroke="#444" stroke-width="1.300" /><path d="M580 750l8 19h38l9-19z" fill="#fff" /><path d="M635 749.800h386" stroke="#111" stroke-width="1.700" /><g class="st"><text x="588" y="765.500" font-weight="bold" textLength="38" lengthAdjust="spacingAndGlyphs">Main</text><text x="642" y="765.500" textLength="30" lengthAdjust="spacingAndGlyphs">Text</text><text x="688" y="765.500" textLength="52" lengthAdjust="spacingAndGlyphs">Models</text><text x="758" y="765.500" textLength="25">Info</text></g></svg>
                <div class="hb"><s class="lf"></s></div><div class="ht"></div><div class="hr"><s class="rt"></s></div>
              </div>
              <div class="files"><span>CB_OUTPUT_CHAR.cir</span></div>
            </div>
          </div>
          <div class="out"><b>×</b><i></i></div>
          <div class="status"><span class="s1">Select Mode</span><span class="s2">Drawing area</span><span class="s3">Grid 53,36</span><span class="s4"></span></div>
        </div>

        <div class="who">Prof. Rajesh B. Ghongade</div>

        <div class="call">
          <div class="rec"><svg viewBox="0 0 20 20" width="20" height="20"><circle cx="10" cy="10" r="8.500" fill="none" stroke="#fff" stroke-width="1.500" /><circle cx="10" cy="10" r="6.300" fill="#c4314b" /></svg><span>38:35</span></div>
          <div class="btn"><svg viewBox="0 0 28 28" width="28" height="28"><path d="M2 7q0-2 2-2h13q2 0 2 2v14q0 2-2 2H4q-2 0-2-2zM20 12l7-5v14l-7-5z" fill="#fff" /><path d="M2 27L27 1" stroke="#414141" stroke-width="5" /><path d="M1 27L26 2" stroke="#fff" stroke-width="1.700" /></svg></div>
          <div class="btn"><svg viewBox="0 0 28 28" width="28" height="28"><path d="M10 6q0-5 4-5t4 5v7q0 5-4 5t-4-5z" fill="#fff" /><path d="M6 13q0 9 8 9t8-9M14 22v5" fill="none" stroke="#fff" stroke-width="1.700" /><path d="M2 27L27 1" stroke="#414141" stroke-width="5" /><path d="M1 27L26 2" stroke="#fff" stroke-width="1.700" /></svg></div>
          <div class="btn"><svg viewBox="0 0 28 28" width="28" height="28" fill="none" stroke="#8b8b8b" stroke-width="1.700"><path d="M9 23H4q-2 0-2-2V5q0-2 2-2h20q2 0 2 2v16q0 2-2 2h-5" /><path d="M14 26V12M8 17l6-6 6 6" stroke-width="2.800" /></svg></div>
          <div class="btn"><svg viewBox="0 0 28 28" width="28" height="28" fill="#fff"><circle cx="4" cy="14" r="3.500" /><circle cx="14" cy="14" r="3.500" /><circle cx="24" cy="14" r="3.500" /></svg></div>
          <div class="btn d"><svg viewBox="0 0 28 28" width="28" height="28" fill="none" stroke="#fff" stroke-width="1.600" stroke-linejoin="round"><path d="M7 17V6q0-2 1.500-2T10 6v8V3q0-2 1.500-2T13 3v10V3q0-2 1.500-2T16 3v11V5q0-2 1.500-2T19 5v13l3-4q2-2 3 0l-5 9q-2 4-6 4-7 0-7-7z" /></svg></div>
          <div class="btn d"><svg viewBox="0 0 28 28" width="28" height="28" fill="none" stroke="#fff" stroke-width="1.600"><path d="M5 4h18q2 0 2 2v20l-6-5H5q-2 0-2-2V6q0-2 2-2zM8 9h12M8 13h12M8 17h7" /></svg></div>
          <div class="btn d"><svg viewBox="0 0 28 28" width="28" height="28" fill="none" stroke="#fff" stroke-width="1.600"><circle cx="7" cy="9" r="3.500" /><circle cx="18" cy="8" r="4" /><path d="M8 25H6q-3 0-3-3v-6h6M13 14h12v7q0 4-4 4h-4q-4 0-4-4z" /></svg><b>1</b></div>
          <div class="hang"><svg viewBox="0 0 28 28" width="28" height="28"><path d="M1 16q1-7 13-7t13 7q0 3-2 3l-6-1v-4q-5-2-10 0v4l-6 1q-2 0-2-3z" fill="#fff" /></svg></div>
        </div>
      </section>

      <section class="strip">
        <div class="plus"><span>+49</span></div>
        {#each people as [ini, name, muted, bg, fg, tile], i}
          <div class="tile" class:talk={i === 6} style:background-color={tile}>
            <div class="av" style:background={bg} style:color={fg}>{ini}</div>
            <div class="name"><span>{name}</span>{#if muted}{@render mic()}{/if}</div>
          </div>
        {/each}
      </section>
    </main>
  </div>

  <footer>
    <div class="start"><svg viewBox="0 0 20 20" width="20" height="20" fill="#fff"><path d="M0 3l8-1v7.500H0zM9 1.800L20 0v9.500H9zM0 10.500h8V18l-8-1zM9 10.500h11V20L9 18.200z" /></svg></div>
    <div class="find"><svg viewBox="0 0 22 22" width="22" height="22" fill="none" stroke="#eee" stroke-width="1.500"><circle cx="13" cy="8" r="6.500" /><path d="M8.500 13L1 20.500" /></svg><span>Type here to search</span></div>
    <div class="task"><svg viewBox="0 0 24 24" width="24" height="24"><circle cx="12" cy="12" r="8.500" fill="none" stroke="#fff" stroke-width="2.500" /></svg></div>
    <div class="task"><svg viewBox="0 0 24 24" width="24" height="24" fill="none" stroke="#eee" stroke-width="1.500"><path d="M1 2v3h13V2M1 8h13v8H1zM1 22v-3h13v3M19.500 2v5M19.500 14v8" /><path d="M18 9h3v3h-3z" fill="#eee" stroke="none" /></svg></div>
    <div class="task"><svg viewBox="0 0 30 26" width="30" height="26"><path d="M1 2h10l2 3h15v19H1z" fill="#e2a21b" /><path d="M1 7h27v17H1z" fill="#fbd264" /><path d="M6 25v-8q0-3 3-3h12q3 0 3 3v8h-5v-5h-8v5z" fill="#2e8edb" /></svg></div>
    <div class="task"><svg viewBox="0 0 30 30" width="30" height="30"><path d="M1 15Q2 2 14 1q13 0 15 12 0 7-8 7-5 0-3-4 1-5-5-6-8-1-12 5z" fill="#35c1b8" /><path d="M1 15q0 12 12 14 8 1 14-6-8 3-13-1-5-4-1-11-8-4-12 4z" fill="#1b75cf" /><path d="M15 1q13 0 14 12 0 7-7 7-5 0-4-4 4-4 0-8Q11 3 3 8q4-7 12-7z" fill="#57d27c" opacity=".650" /></svg></div>
    <div class="task"><svg viewBox="0 0 30 26" width="30" height="26"><path d="M0 8l15-7 15 7v18H0z" fill="#fff" /><path d="M2 9h26l-11 9-1 4-4-5z" fill="#1c1c1c" /></svg></div>
    <div class="task"><div class="amz">a<svg viewBox="0 0 20 6" width="20" height="6"><path d="M1 1q9 6 17 0M15 0l4 0-1 4" fill="none" stroke="#f59a1b" stroke-width="1.700" /></svg></div></div>
    <div class="task"><svg viewBox="0 0 30 26" width="30" height="26" fill="#fff"><path d="M8 0l7 4.500L8 9 1 4.500zM22 0l7 4.500L22 9l-7-4.500zM8 9l7 4.500L8 18l-7-4.500zM22 9l7 4.500-7 4.500-7-4.500zM15 15.500l7 4.500-7 5-7-5z" /></svg></div>
    <div class="task"><svg viewBox="0 0 20 30" width="20" height="30" fill="#fff"><path d="M13 0Q3 6 4 11q1 3 6 7-2 6-5 12 9-6 10-12 0-3-7-8 2-6 5-10z" /></svg></div>
    <div class="task tm"><svg viewBox="0 0 32 32" width="32" height="32"><circle cx="17" cy="5" r="4.500" fill="#7b83eb" /><circle cx="26" cy="7" r="3.200" fill="#5059c9" /><path d="M20 11h11v8q0 6-6 6h-5z" fill="#5059c9" /><path d="M9 11h15v11q-1 7-8 7t-7-7z" fill="#7b83eb" /><path d="M1 9h15v15H1z" fill="#4b53bc" /><path d="M5 13h7M8.500 13v8" stroke="#fff" stroke-width="1.800" /></svg><b>1</b></div>
    <div class="tray">
      <svg viewBox="0 0 28 28" width="28" height="28"><circle cx="14" cy="14" r="12.500" fill="#1c9be0" stroke="#fff" stroke-width="2.500" /><path d="M10 11q0-4 4-4t4 3.500q0 2-2 3.500t-2 3M14 19v3" fill="none" stroke="#fff" stroke-width="2.800" /></svg>
      <svg class="t2" viewBox="0 0 18 12" width="18" height="12"><path d="M2 10l7-7 7 7" fill="none" stroke="#eee" stroke-width="1.500" /></svg>
      <svg class="t3" viewBox="0 0 20 16" width="20" height="16"><path d="M1.500 2.500h15v9h-15z" fill="none" stroke="#fff" /><path d="M3 4h7v6H3zM17 5h2v4h-2z" fill="#fff" /><circle cx="14.500" cy="11" r="5" fill="#128a2b" /><path d="M14.500 8l2 3-2 3-2-3z" fill="#fff" /></svg>
      <svg class="t4" viewBox="0 0 18 18" width="18" height="18" fill="none"><path d="M2 16Q2 3 16 2" stroke="#666" stroke-width="1.300" /><path d="M6 16q0-8 10-9M10 16q0-4 6-5" stroke="#eee" stroke-width="1.300" /><circle cx="15" cy="15" r="1.500" fill="#fff" /></svg>
      <svg class="t5" viewBox="0 0 22 18" width="22" height="18" fill="none" stroke="#eee" stroke-width="1.200"><path d="M1 6h3l5-4v14l-5-4H1zM12 6q2 3 0 6M15 4q3 5 0 10" /><path d="M18 2q4 7 0 14" stroke="#777" /></svg>
      <span class="eng">ENG</span>
      <div class="clock"><span>11:33 AM</span><span>08-08-2020</span></div>
      <svg class="t6" viewBox="0 0 22 22" width="22" height="22"><path d="M1 1h19v16H6l-4 3v-3H1z" fill="#fff" /><path d="M4 5h12M4 9h12M4 13h7" stroke="#1c1c1c" stroke-width="1.500" /><path d="M17 11q1 6-5 7 4 4 8 0 2-4-3-7z" fill="#fff" stroke="#1c1c1c" /></svg>
      <i class="peek"></i>
    </div>
  </footer>
</div>

<style>
  :global(body) { margin: 0; background: #000; overflow: hidden; }
  * { box-sizing: border-box; }
  svg { display: block; flex: none; }
  .screen { width: 1920px; height: 1080px; display: flex; flex-direction: column; overflow: hidden; font-family: "Open Sans", "Noto Sans", sans-serif; color: #fff; background: #000; white-space: nowrap; }
  header { height: 59px; flex: none; background: #1f1f1f; display: flex; align-items: center; }
  .arrows { margin-left: 16px; }
  .compose { margin-left: 412px; }
  .search { margin-left: 24px; width: 853px; height: 40px; border-radius: 4px; background: #333; display: flex; align-items: center; gap: 8px; padding-left: 9px; color: #bbb; font-size: 16.200px; }
  .me { position: relative; margin-left: 313px; width: 40px; height: 40px; border-radius: 50%; background: #fdeecb; color: #8a6111; font: 600 14.500px/41px "Open Sans", sans-serif; text-align: center; }
  .me i { position: absolute; right: -2px; bottom: -2px; width: 17px; height: 17px; border-radius: 50%; background: #c4314b; border: 2px solid #1f1f1f; }
  .wc { margin-left: 29px; }
  .body { height: 970px; flex: none; display: flex; }
  nav { width: 84px; flex: none; background: #202020; display: flex; flex-direction: column; }
  .item { height: 70px; flex: none; display: flex; flex-direction: column; align-items: center; padding-top: 13px; position: relative; color: #a6a6a6; font-size: 12.200px; letter-spacing: -.2px; }
  .item span { line-height: 17px; margin-top: 1px; }
  .item.active { color: #fff; background: linear-gradient(90deg, #52529a, #3d3e63 35%, #3e3f60); border-left: 4px solid #e2e2f6; padding-right: 4px; }
  .item.active svg { margin-top: 2px; }
  .item.active span { margin-top: -1px; }
  .item b { position: absolute; left: 45px; top: 3px; width: 25px; height: 25px; border: 3px solid #401c18; border-radius: 50%; background: #cc4a31; color: #fff; font: 600 12px/19px "Open Sans", sans-serif; text-align: center; }
  .item.more { flex-direction: row; justify-content: center; gap: 4.500px; padding-top: 0; }
  .more i { width: 5px; height: 5px; border-radius: 50%; background: #ddd; }
  .low { margin-top: 201px; }
  .phone { margin: 9px 0 0 4px; width: 75px; height: 50px; background: #f5f5ff; border-radius: 4px; display: grid; place-items: center; }
  main { width: 1836px; flex: none; }
  .share { height: 853px; background: #000; position: relative; padding: 9px 0 0 124px; }
  .app { width: 1590px; height: 844px; background: #f0eef2; color: #222; display: flex; flex-direction: column; overflow: hidden; }
  .title { height: 27px; flex: none; background: linear-gradient(#7899b8 0, #9bb9d6 3px, #a1bfdc 60%, #b9d2e9); display: flex; align-items: center; padding-left: 1px; font-size: 15px; color: #1c2a40; letter-spacing: -.160px; }
  .title span { margin-left: 9px; }
  .caps { display: flex; gap: 3px; margin-left: auto; margin-right: 2px; padding-bottom: 2px; }
  .caps i { width: 39px; height: 22px; border: 1px solid #516f94; border-radius: 3px; background: linear-gradient(#c3d6ea 45%, #92b2d2 50%, #b4d0ea); }
  .caps i.x { background: linear-gradient(#e19a84 45%, #c2341c 50%, #d87151); border-color: #68262c; }
  .menu { height: 27px; flex: none; background: linear-gradient(#f0f5fd 0, #f0f5fd 20%, #dadff0 40%, #dfe4f4 80%, #ccd1dc); border-bottom: 1px solid #999; display: flex; align-items: center; padding-left: 8px; font-size: 14.500px; letter-spacing: -.180px; }
  .menu > svg { margin-right: 9px; }
  .mdi { margin-left: auto; display: flex; gap: 1px; }
  .mdi i { width: 24px; height: 23px; border: 1px solid #a3b6c9; background: #e0edfa; display: grid; place-items: center; }
  .bar1 { height: 36px; flex: none; background: linear-gradient(#f4f5fb, #cfd4e8); border-bottom: 1px solid #999; display: flex; }
  .group { height: 35px; flex: none; background: #f2f3f5; border-right: 1px solid #aaa; display: flex; align-items: center; padding-left: 12px; position: relative; }
  .group::before { content: ""; position: absolute; left: 5px; top: 6px; height: 23px; border-left: 2px dotted #aaa; }
  .parts, .panels { padding-left: 13.700px; }
  .tool { width: 26.700px; height: 27px; flex: none; display: grid; place-items: center; }
  .tool.on { border-left: 1px solid #999; border-top: 1px solid #999; background: #f8f8fa; }
  .drop { width: 19.900px; flex: none; display: flex; justify-content: center; }
  .drop::after { content: ""; border: 5.500px solid transparent; border-top: 6px solid #000; border-bottom: 0; }
  .drop.off::after { border-top-color: #aaa; }
  .sep { width: 6.300px; flex: none; display: flex; justify-content: center; }
  .sep::after { content: ""; width: 1px; height: 24px; background: #aaa; }
  .work { height: 650px; flex: none; display: flex; }
  aside { width: 253px; height: 647px; flex: none; border-right: 1px solid #aaa; border-bottom: 1px solid #aaa; font-family: "Liberation Sans", sans-serif; padding-left: 3px; }
  .grip { height: 19px; display: flex; align-items: center; padding-left: 2px; }
  .grip i { width: 221px; height: 5px; border: 1px solid #999; border-left: 0; margin-right: 4px; }
  .grip b, .out b { font: bold 16px/16px "Liberation Sans", sans-serif; color: #000; }
  .tabs { height: 23px; display: flex; align-items: flex-end; padding-left: 3px; font-size: 13.500px; letter-spacing: -.450px; }
  .tabs span { height: 20px; line-height: 22px; border-right: 2px solid #777; padding: 0 5px 0 4px; }
  .tabs span.cur { height: 24px; line-height: 25px; padding: 0 7px 0 6px; }
  .sheet { width: 240px; height: 600px; border-right: 2px solid #888; border-bottom: 2px solid #888; padding: 6px 6px 0 6px; }
  .preview { width: 226px; height: 212px; background: #fff; border-left: 2px solid #777; border-top: 2px solid #777; }
  .red { font: 12px "Liberation Sans", sans-serif; fill: #f22; }
  .list { width: 227px; height: 374px; margin-top: 5px; border-left: 2px solid #777; border-top: 2px solid #777; font-size: 15px; }
  .compress { width: 88px; height: 21px; margin: 6px 0 0 69px; border-right: 2px solid #888; border-bottom: 2px solid #888; padding-left: 8px; line-height: 20px; letter-spacing: 0; }
  .list p { margin: 0 0 0 3px; line-height: 21px; height: 28px; letter-spacing: .1px; }
  .treebox { height: 291px; display: flex; background: #fff; }
  .tree { width: 203px; height: 291px; overflow: hidden; font: 15px/23.330px "Open Sans", "Noto Sans", sans-serif; letter-spacing: -.2px; background: repeating-linear-gradient(#fff 0 1px, transparent 1px 2px), linear-gradient(90deg, transparent 10px, #888 10px 11px, transparent 11px 32px, #888 32px 33px, transparent 33px); }
  .l1, .l2 { display: flex; align-items: center; padding-left: 27px; gap: 8px; height: 23.330px; }
  .l2 { padding-left: 49px; }
  .tree i { width: 11px; height: 11px; border: 1px solid #555; background: #fff; font: bold 11px/9px "Liberation Sans", sans-serif; text-align: center; flex: none; }
  .l3 { margin-left: 54px; height: 23.330px; border-left: 1px dotted #888; display: flex; align-items: center; gap: 3px; }
  .l3::before { content: ""; width: 10px; border-top: 1px dotted #888; }
  s { width: 0; height: 0; border: 4px solid transparent; flex: none; }
  .up { border-bottom: 5px solid #333; border-top: 0; }
  .dn { border-top: 5px solid #333; border-bottom: 0; }
  .lf { border-right: 5px solid #333; border-left: 0; }
  .rt { border-left: 5px solid #333; border-right: 0; }
  .vs { width: 20px; background: #efeff1; display: flex; flex-direction: column; align-items: center; padding: 9px 0; }
  .vs b, .hs b { display: grid; place-items: center; border: 1px solid #999; border-radius: 2px; }
  .vs b { width: 20px; height: 78px; margin-top: 23px; background: linear-gradient(90deg, #f5f5f5, #c9cbd0); }
  .vs b i { width: 8px; height: 10px; background: repeating-linear-gradient(#555 0 2px, transparent 2px 4px); }
  .vs .dn { margin-top: auto; }
  .hs { height: 22px; background: #efeff1; display: flex; align-items: center; padding-left: 7px; }
  .hs b { margin: 0 36px 0 11px; width: 129px; height: 20px; background: linear-gradient(#f5f5f5, #c9c9d2); }
  .hs b i { width: 10px; height: 8px; background: repeating-linear-gradient(90deg, #555 0 2px, transparent 2px 4px); }
  .doc { width: 1337px; padding-left: 2px; }
  .bar2 { height: 37px; width: 1324px; margin-left: 4px; border-bottom: 1px solid #aaa; display: flex; align-items: center; padding-top: 3px; }
  .bar3 { height: 34px; display: flex; align-items: center; padding-left: 4px; }
  .canvas { height: 520px; width: 1330px; margin-left: 2px; border: 2px solid #777; border-right-color: #999; border-bottom: 0; background: #fff; display: flex; }
  .lab { font: 29.500px "DejaVu Sans", sans-serif; fill: #0a7014; }
  .mono { font-family: "DejaVu Sans Mono", monospace; }
  .cvs { width: 24px; flex: none; background: #fbf8fd; display: flex; flex-direction: column; align-items: flex-start; padding: 4px 0 0; }
  .cvs u { width: 21px; height: 23px; border: 2px solid #888; border-left: 1px solid #ccc; border-top: 1px solid #ccc; background: #f4f2f6; display: grid; place-items: center; margin-top: auto; }
  .cvs u.tp { margin-top: 0; border-top: 2px solid #777; }
  .cvs s { border-width: 5px; }
  .cvs .up { border-top-width: 0; }
  .cvs .dn { border-bottom-width: 0; }
  .cvs .up, .cvs .dn { border-bottom-color: #000; border-top-color: #000; }
  .cvs b { width: 21px; height: 56px; margin-top: 29px; background: #eeebf1; border-right: 2px solid #999; border-bottom: 2px solid #888; }
  .sheets { height: 22px; display: flex; padding-left: 8px; width: 1332px; border-right: 2px solid #999; }
  .sheets > i { width: 21.500px; height: 22px; border: 2px solid #888; border-left-width: 1px; display: grid; place-items: center; background: #f4f2f6; }
  .sheets > i s { border-top-width: 6px; border-bottom-width: 6px; }
  .sheets > i .lf { border-right: 6px solid #000; }
  .sheets > i .rt { border-left: 6px solid #000; }
  .sheets > i .dn { border-top: 5px solid #000; border-bottom: 0; }
  .sheets > i.f s { box-shadow: -2px 0 #000; }
  .sheets > i.l s { box-shadow: 2px 0 #000; }
  .st { font: 15px "Liberation Sans", sans-serif; fill: #222; }
  .hb { width: 29px; border-left: 4px double #777; border-right: 2px solid #888; display: grid; place-items: center; }
  .hb s, .hr s { border-top-width: 6px; border-bottom-width: 6px; }
  .ht { width: 251px; background: linear-gradient(90deg, #fbf8fd 60px, #f0edf3 85px); border-right: 2px solid #888; }
  .hr { flex: 1; background: #fbf8fd; display: flex; justify-content: flex-end; align-items: center; padding-right: 32px; }
  .files { height: 31px; border-top: 2px solid #888; margin-top: 5px; width: 1334px; background: #f3eff5; }
  .files span { display: block; width: 147px; height: 26px; margin-top: -2px; background: #f0eef2; border-right: 2px solid #888; border-bottom: 2px solid #888; font: 14px/28px "Liberation Sans", sans-serif; letter-spacing: -.850px; padding-left: 6px; }
  .out { height: 76px; flex: none; background: #fefdff; border-top: 2px solid #aaa; border-bottom: 1px solid #aaa; padding: 4px 0 0 3px; }
  .out b { display: block; height: 18px; }
  .out i { display: block; width: 5px; height: 48px; margin-left: 3px; border: 1px solid #aaa; border-top: 0; }
  .status { height: 25px; flex: none; display: flex; font: 18px/24px "Liberation Sans", sans-serif; margin-top: 3px; letter-spacing: -.2px; }
  .status span { border-top: 1px solid #aaa; border-left: 1px solid #aaa; padding-left: 2px; }
  .s1 { width: 226px; }
  .s2 { width: 1127px; }
  .s3 { width: 111px; }
  .s4 { flex: 1; }
  .who { position: absolute; left: 40px; top: 811px; font-size: 14.300px; font-weight: 600; letter-spacing: -.3px; text-shadow: 0 1px 3px #000; }
  .call { position: absolute; left: 596px; top: 743px; width: 644px; height: 65px; border-radius: 4px; overflow: hidden; background: #434343; display: flex; filter: drop-shadow(0 5px 6px #0008); }
  .rec { width: 124px; flex: none; border-right: 1px solid #222; display: flex; align-items: center; gap: 20px; padding-left: 18px; color: #a9a9a9; font-size: 16.500px; letter-spacing: -.1px; }
  .btn { width: 65.140px; flex: none; display: grid; place-items: center; position: relative; }
  .d { background: #3b3b3b; }
  .btn b { position: absolute; left: 33px; top: 9px; width: 22px; height: 18px; border-radius: 9px; background: #e97548; font: bold 13px/18px "Open Sans", sans-serif; text-align: center; }
  .hang { flex: 1; background: #9c2e40; display: grid; place-items: center; }
  .strip { height: 117px; display: flex; background: #1b1b1b; overflow: hidden; }
  .plus { width: 263px; padding: 32px 0 0 184px; flex: none; }
  .plus span { display: block; width: 55px; height: 55px; border-radius: 50%; background: #6264a7; font: 600 16.500px/56px "Open Sans", sans-serif; text-align: center; }
  .tile { width: 225.100px; flex: none; display: flex; flex-direction: column; padding-top: 30px; overflow: hidden; position: relative; }
  .av { width: 55px; height: 55px; border-radius: 50%; margin-left: 85px; font: 21.500px/56px "Open Sans", sans-serif; text-align: center; -webkit-text-stroke: .4px currentColor; flex: none; }
  .name { margin: 11px 0 0 18px; display: flex; align-items: center; gap: 9px; height: 22px; font-size: 14.800px; letter-spacing: -.3px; text-shadow: 0 1px 2px #000; }
  .talk { background-image: radial-gradient(circle at 112px 58px, #61619c 20px, #4c4b74 50px, #3d3b50 100px); }
  .talk .av { box-shadow: 0 0 0 2px #333356, 0 0 0 6px #9ea2ff; }
  footer { height: 51px; flex: none; background: #1c1c1c; border-top: 1px solid #000; display: flex; align-items: center; }
  .start { width: 60px; flex: none; padding-left: 20px; }
  .find { width: 430px; flex: none; height: 50px; background: #333; border: 1px solid #5b5b5b; display: flex; align-items: center; gap: 14px; padding-left: 13px; font-size: 17.500px; color: #ccc; }
  .task { width: 61.900px; flex: none; height: 50px; display: grid; place-items: center; position: relative; }
  .amz { width: 30px; height: 30px; background: #fff; color: #232f3e; font: bold 23px/20px "Open Sans", sans-serif; text-align: center; }
  .amz svg { margin: 1px auto; }
  .tm { background: #484848; border-bottom: 3px solid #76d0cc; }
  .tm b { position: absolute; left: 31px; top: 25px; width: 17px; height: 17px; border-radius: 50%; background: #c4142f; font: bold 11px/17px "Open Sans", sans-serif; text-align: center; }
  .tray { margin-left: auto; height: 50px; display: flex; align-items: center; color: #eee; font-size: 14.300px; }
  .t2 { margin-left: 11px; }
  .t3 { margin-left: 12px; }
  .t4 { margin-left: 12px; }
  .t5 { margin-left: 8px; }
  .eng { margin-left: 12px; width: 34px; letter-spacing: -.2px; }
  .clock { margin-left: 10px; width: 84px; display: flex; flex-direction: column; text-align: center; line-height: 23px; letter-spacing: -.25px; }
  .t6 { margin-left: 15px; }
  .peek { margin-left: 24px; width: 6px; height: 50px; border-left: 1px solid #777; }
</style>
